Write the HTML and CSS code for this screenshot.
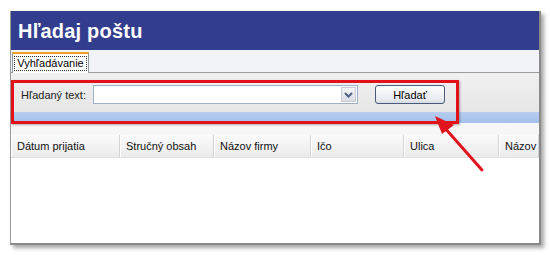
FILE: index.html
```html
<!DOCTYPE html>
<html>
<head>
<meta charset="utf-8">
<link rel="stylesheet" href="styles.css">
</head>
<body>
<div class="window">
  <div class="titlebar">Hľadaj poštu</div>
  <div class="tabstrip">
    <div class="tab"><span class="tab-label">Vyhľadávanie</span></div>
  </div>
  <div class="toolbar">
    <span class="label">Hľadaný text:</span>
    <div class="combo">
      <div class="combo-field"></div>
      <div class="combo-btn">
        <svg width="9" height="6" viewBox="0 0 9 6"><path d="M1 1 L4.5 4.5 L8 1" fill="none" stroke="#4d6185" stroke-width="2"/></svg>
      </div>
    </div>
    <button class="btn">Hľadať</button>
  </div>
  <div class="bluebar"></div>
  <div class="gap"></div>
  <div class="header">
    <div class="col c1">Dátum prijatia</div>
    <div class="col c2">Stručný obsah</div>
    <div class="col c3">Názov firmy</div>
    <div class="col c4">Ičo</div>
    <div class="col c5">Ulica</div>
    <div class="col c6">Názov r</div>
  </div>
  <div class="grid-body"></div>
</div>
<div class="highlight"></div>
<svg class="arrow" width="550" height="255" viewBox="0 0 550 255">
  <line x1="482" y1="170" x2="444" y2="127" stroke="#e0141c" stroke-width="3" stroke-linecap="round"/>
  <polygon points="435,116 454,125 442,134" fill="#e0141c"/>
</svg>
</body>
</html>
```
FILE: styles.css
```css
html, body {
  margin: 0;
  padding: 0;
  background: #ffffff;
}
body {
  width: 550px;
  height: 255px;
  position: relative;
  overflow: hidden;
  font-family: "Liberation Sans", Arial, sans-serif;
  font-size: 11px;
  color: #000;
}
.window {
  position: absolute;
  left: 10px;
  top: 11px;
  width: 528px;
  height: 232px;
  border-left: 1px solid #9a9a9a;
  border-right: 2px solid #8a8a8a;
  border-bottom: 2px solid #8a8a8a;
  background: #fff;
  box-shadow: 3px 3px 4px rgba(0,0,0,0.35);
  display: flex;
  flex-direction: column;
}
.titlebar {
  height: 39px;
  background: #333d8e;
  color: #fff;
  font-weight: bold;
  font-size: 20px;
  line-height: 40px;
  padding-left: 7px;
  letter-spacing: 0.2px;
  flex: none;
}
.tabstrip {
  height: 22px;
  background: #f1f3f9;
  border-bottom: 1px solid #9c9c9c;
  flex: none;
  display: flex;
  align-items: flex-end;
  padding-left: 1px;
}
.tab {
  height: 19px;
  width: 77px;
  margin-bottom: -1px;
  background: #fff;
  border: 1px solid #919b9c;
  border-top: 2px solid #f0a020;
  border-bottom: none;
  display: flex;
  align-items: center;
  justify-content: center;
  box-sizing: border-box;
  height: 21px;
}
.tab-label {
  border: 1px dotted #333;
  padding: 0 2px;
  line-height: 13px;
}
.toolbar {
  height: 39px;
  flex: none;
  background: linear-gradient(#f0f0f0, #e6e6e6);
  display: flex;
  align-items: center;
  padding-left: 10px;
  padding-top: 4px;
  box-sizing: border-box;
}
.label {
  width: 72px;
  color: #222;
}
.combo {
  display: flex;
  width: 265px;
  height: 19px;
  border: 1px solid #9fb0c8;
  box-sizing: border-box;
  background: #fff;
}
.combo-field {
  flex: 1;
}
.combo-btn {
  width: 15px;
  margin: 1px;
  background: linear-gradient(#f4f4f4, #d9dde4);
  border: 1px solid #c7ccd6;
  box-sizing: border-box;
  display: flex;
  align-items: center;
  justify-content: center;
}
.btn {
  margin-left: 17px;
  width: 70px;
  height: 19px;
  padding: 0;
  border: 1px solid #4a5a7a;
  border-radius: 3px;
  background: linear-gradient(#ffffff, #e8eaf0 80%, #d6d9e2);
  font-family: "Liberation Sans", Arial, sans-serif;
  font-size: 11px;
  color: #000;
}
.bluebar {
  height: 11px;
  flex: none;
  background: linear-gradient(#b7cdf1, #a3bfea);
}
.gap {
  height: 12px;
  flex: none;
  background: #f6f6f6;
}
.header {
  height: 22px;
  flex: none;
  display: flex;
  background: linear-gradient(#fafafa, #ebebeb);
  border-bottom: 1px solid #e0e0e0;
  overflow: hidden;
}
.col {
  flex: none;
  border-right: 1px solid #d4d4d4;
  border-left: 1px solid #fff;
  padding-left: 5px;
  line-height: 22px;
  white-space: nowrap;
  overflow: hidden;
  box-sizing: border-box;
  color: #111;
}
.c1 { width: 109px; }
.c2 { width: 94px; }
.c3 { width: 97px; }
.c4 { width: 93px; }
.c5 { width: 95px; }
.c6 { width: 40px; }
.grid-body {
  flex: 1;
  background: #fff;
}
.highlight {
  position: absolute;
  left: 11px;
  top: 80px;
  width: 448px;
  height: 44px;
  border: 3px solid #e3101a;
  box-sizing: border-box;
  box-shadow: 1px 1px 2px rgba(0,0,0,0.3);
}
.arrow {
  position: absolute;
  left: 0;
  top: 0;
}
```
